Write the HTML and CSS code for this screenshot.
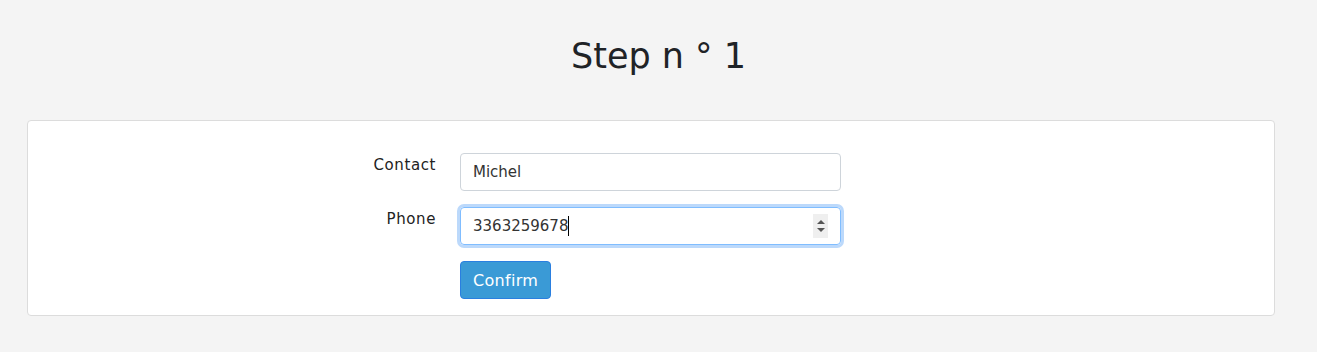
FILE: index.html
```html
<!DOCTYPE html>
<html lang="en">
<head>
<meta charset="utf-8">
<title>Step n ° 1</title>
<link rel="stylesheet" href="styles.css">
</head>
<body>
  <h1 class="title">Step n ° 1</h1>
  <div class="card">
    <div class="row">
      <label class="label">Contact</label>
      <div class="field">Michel</div>
    </div>
    <div class="row">
      <label class="label">Phone</label>
      <div class="field focus">
        <span class="value">3363259678</span><span class="caret"></span>
        <span class="spin"><span class="up"></span><span class="down"></span></span>
      </div>
    </div>
    <div class="row">
      <span class="label"></span>
      <button class="btn" type="button">Confirm</button>
    </div>
  </div>
</body>
</html>
```

FILE: styles.css
```css
html, body {
  margin: 0;
  padding: 0;
  background: #f4f4f4;
  font-family: "DejaVu Sans", "Open Sans", sans-serif;
  color: #212529;
}
.title {
  margin: 0;
  padding-top: 32px;
  height: 120px;
  box-sizing: border-box;
  text-align: center;
  font-weight: 400;
  font-size: 35px;
  line-height: 48px;
  letter-spacing: 0;
  color: #1f2327;
}
.card {
  margin: 0 42px 0 27px;
  background: #fff;
  border: 1px solid #dcdcdc;
  border-radius: 4px;
  padding: 32px 0 16px;
  display: flex;
  flex-direction: column;
  gap: 16px;
}
.row {
  display: flex;
  align-items: flex-start;
  gap: 24px;
}
.label {
  width: 408px;
  text-align: right;
  font-size: 15px;
  line-height: 22px;
  padding-top: 1px;
  color: #222;
  letter-spacing: 0.6px;
}
.field {
  position: relative;
  box-sizing: border-box;
  width: 381px;
  height: 38px;
  border: 1px solid #ced4da;
  border-radius: 4px;
  padding: 0 12px;
  display: flex;
  align-items: center;
  font-size: 15px;
  color: #333;
}
.field.focus {
  border-color: #80bdff;
  box-shadow: 0 0 0 3px #bcd9fb;
}
.caret {
  display: inline-block;
  width: 1px;
  height: 20px;
  background: #000;
}
.spin {
  position: absolute;
  right: 12px;
  top: 6px;
  width: 15px;
  height: 24px;
  background: #efefef;
  display: flex;
  flex-direction: column;
  align-items: center;
  justify-content: center;
  gap: 4px;
}
.up, .down {
  width: 0;
  height: 0;
  border-left: 4px solid transparent;
  border-right: 4px solid transparent;
}
.up { border-bottom: 4px solid #555; }
.down { border-top: 4px solid #555; }
.btn {
  box-sizing: border-box;
  height: 38px;
  padding: 0 12px;
  background: #3a9ad6;
  border: 1px solid #2a7fe0;
  border-radius: 4px;
  color: #fff;
  font-family: inherit;
  font-size: 16px;
  letter-spacing: 0.3px;
}
```
